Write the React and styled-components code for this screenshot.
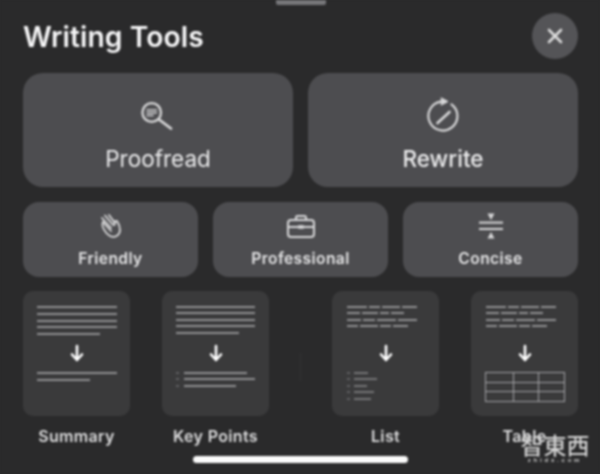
import React from 'react';
import styled, { createGlobalStyle } from 'styled-components';

const GlobalStyle = createGlobalStyle`
  html, body {
    margin: 0;
    padding: 0;
    background: #2a2a2b;
  }
`;

const Sheet = styled.div`
  position: relative;
  width: 600px;
  height: 474px;
  box-sizing: border-box;
  padding: 0 22px 0 23px;
  overflow: hidden;
  background: #2a2a2b;
  color: #e9e9ea;
  font-family: Inter, "Liberation Sans", sans-serif;
  filter: blur(0.85px);
`;

const Grabber = styled.div`
  width: 50px;
  height: 5px;
  margin: 0 auto 8px;
  background: #77777a;
  border-radius: 0 0 2px 2px;
`;

const Header = styled.header`
  display: flex;
  align-items: center;
  justify-content: space-between;
  height: 46px;
  margin-bottom: 14px;
`;

const Title = styled.h1`
  margin: 1px 0 0;
  font-size: 28.2px;
  font-weight: 600;
  letter-spacing: 0.1px;
  color: #f6f6f7;
`;

const CloseButton = styled.div`
  width: 46px;
  height: 46px;
  border-radius: 50%;
  background: #545457;
  display: flex;
  align-items: center;
  justify-content: center;
`;

const BigRow = styled.div`
  display: grid;
  grid-template-columns: 270px 270px;
  gap: 15px;
  margin-bottom: 15px;
`;

const BigButton = styled.div`
  height: 114px;
  border-radius: 20px;
  background: #4d4d50;
  display: flex;
  flex-direction: column;
  align-items: center;
  padding-top: 24px;
  box-sizing: border-box;
`;

const BigLabel = styled.span`
  margin-top: 12px;
  font-size: 22.5px;
  line-height: 28px;
  font-weight: ${p => (p.$medium ? 500 : 400)};
  color: #ececed;
`;

const MidRow = styled.div`
  display: grid;
  grid-template-columns: repeat(3, 175px);
  gap: 15px;
  margin-bottom: 14px;
`;

const MidButton = styled.div`
  height: 75px;
  border-radius: 16px;
  background: #4d4d50;
  display: flex;
  flex-direction: column;
  align-items: center;
  padding-top: 11px;
  box-sizing: border-box;
`;

const MidLabel = styled.span`
  margin-top: 10px;
  font-size: 15.6px;
  line-height: 20px;
  font-weight: 600;
  letter-spacing: 0.4px;
  color: #e6e6e7;
`;

const ThumbRow = styled.div`
  display: flex;
  justify-content: space-between;
  align-items: flex-start;
`;

const ThumbGroup = styled.div`
  display: flex;
  gap: 32px;
`;

const Separator = styled.div`
  width: 1px;
  height: 28px;
  margin-top: 62px;
  background: #323233;
`;

const ThumbItem = styled.div`
  width: 107px;
  display: flex;
  flex-direction: column;
  align-items: center;
`;

const ThumbCard = styled.div`
  width: 107px;
  height: 125px;
  border-radius: 10px;
  background: #3a3a3b;
  line-height: 0;
`;

const ThumbLabel = styled.span`
  margin-top: 10px;
  font-size: 16px;
  line-height: 20px;
  font-weight: 600;
  letter-spacing: 0.35px;
  white-space: nowrap;
  color: #dcdcdd;
`;

const HomeBar = styled.div`
  width: 215px;
  height: 7px;
  margin: 10px auto 0;
  border-radius: 4px;
  background: #fbfbfb;
`;

const Watermark = styled.div`
  position: absolute;
  left: 520px;
  top: 431px;
  width: 70px;
  text-align: center;
  color: #d4d4d4;
`;

const WatermarkName = styled.div`
  font-family: "Noto Sans CJK TC", "Noto Sans CJK SC", sans-serif;
  font-size: 23px;
  line-height: 26px;
  font-weight: 500;
  white-space: nowrap;
`;

const WatermarkSite = styled.div`
  font-family: "Liberation Sans", sans-serif;
  font-size: 6px;
  line-height: 7px;
  font-weight: 700;
  letter-spacing: 2.8px;
`;

const stroke = '#d8d8d9';

const ProofreadIcon = () => (
  <svg width="36" height="36" viewBox="0 0 36 36" fill="none" stroke={stroke} strokeLinecap="round">
    <circle cx="11.7" cy="15.5" r="9.3" strokeWidth="2.3" />
    <path d="M19 22.5 L31 31.5" strokeWidth="2.8" />
    <path d="M7 13h9.5M7 15.8h9.5M7 18.6h6" strokeWidth="1.5" />
  </svg>
);

const RewriteIcon = () => (
  <svg width="36" height="36" viewBox="0 0 36 36" fill="none" stroke={stroke} strokeLinecap="round">
    <path d="M26.5 7.3 A14.5 14.5 0 1 1 16 4.6" strokeWidth="2.2" />
    <path d="M16.5 1 L23 4.5 L16.5 8 Z" fill={stroke} strokeWidth="1" strokeLinejoin="round" />
    <path d="M12.5 26 L24.5 15" strokeWidth="2.6" />
  </svg>
);

const HandIcon = () => (
  <svg width="24" height="26" viewBox="0 0 24 26" fill="none" stroke={stroke} strokeLinecap="round" strokeLinejoin="round" strokeWidth="1.8">
    <path d="M4 9 L12 18" />
    <path d="M3 5 L12 15" />
    <path d="M6 2.5 L14 12" />
    <path d="M10 2 L16 10" />
    <path d="M4 9 C2 13 6 20 11 23 C16 25.5 21 22 21 17 C21 14 20 11 18 8 L15.5 8.5 L15.5 12" />
  </svg>
);

const BriefcaseIcon = () => (
  <svg width="30" height="26" viewBox="0 0 30 26" fill="none" stroke={stroke} strokeWidth="2" strokeLinejoin="round">
    <rect x="2" y="7" width="26" height="17" rx="3" />
    <path d="M10 7 V4.5 a1.5 1.5 0 0 1 1.5 -1.5 h7 a1.5 1.5 0 0 1 1.5 1.5 V7" />
    <path d="M2 14 H12 M18 14 H28" />
    <rect x="12" y="12.5" width="6" height="3" rx="1" fill={stroke} strokeWidth="0.6" />
  </svg>
);

const ConciseIcon = () => (
  <svg width="26" height="26" viewBox="0 0 26 26" fill={stroke} stroke="none">
    <path d="M9.5 0.5 H16.5 L13 7 Z" />
    <rect x="1" y="8.6" width="24" height="2" />
    <rect x="1" y="15" width="24" height="2" />
    <path d="M13 19 L16.5 25.5 H9.5 Z" />
  </svg>
);

const Arrow = ({ x }) => (
  <path
    d={`M${x} 55 V69 M${x - 5} 63.5 L${x} 69 L${x + 5} 63.5`}
    fill="none"
    stroke="#ffffff"
    strokeWidth="2.6"
    strokeLinecap="round"
    strokeLinejoin="round"
  />
);

const Line = ({ x1 = 14, x2, y, dash, color = '#8f8f91', w = 2 }) => (
  <line x1={x1} x2={x2} y1={y} y2={y} stroke={color} strokeWidth={w} strokeDasharray={dash} />
);

const Words = () => (
  <>
    <Line x1={15} x2={85} y={16} dash="20 2 11 2 18 2 15 0" />
    <Line x1={15} x2={72} y={22} dash="13 2 16 2 9 2 13 0" />
    <Line x1={15} x2={85} y={29} dash="14 2 12 2 19 2 19 0" />
    <Line x1={15} x2={76} y={35} dash="11 2 18 2 11 2 15 0" />
  </>
);

const Thumb = ({ children }) => (
  <ThumbCard>
    <svg width="107" height="125" viewBox="0 0 107 125">{children}</svg>
  </ThumbCard>
);

const SummaryThumb = () => (
  <Thumb>
    {[16, 23, 30, 36].map(y => <Line key={y} x2={94} y={y} />)}
    <Line x2={77} y={43} />
    <Arrow x={54} />
    <Line x2={94} y={82} />
    <Line x2={67} y={89} />
  </Thumb>
);

const KeyPointsThumb = () => (
  <Thumb>
    {[16, 22, 29, 35].map(y => <Line key={y} x2={93} y={y} />)}
    <Line x2={77} y={42} />
    <Arrow x={54} />
    {[[82, 85], [88, 93], [95, 74]].map(([y, x2]) => (
      <React.Fragment key={y}>
        <Line x1={14} x2={17} y={y} color="#5f5f61" />
        <Line x1={22} x2={x2} y={y} />
      </React.Fragment>
    ))}
  </Thumb>
);

const ListThumb = () => (
  <Thumb>
    <Words />
    <Arrow x={54} />
    {[[82, 36], [88, 45], [95, 35], [101, 42], [108, 39]].map(([y, x2]) => (
      <React.Fragment key={y}>
        <Line x1={15} x2={18} y={y} color="#5f5f61" />
        <Line x1={22} x2={x2} y={y} color="#747476" />
      </React.Fragment>
    ))}
  </Thumb>
);

const TableThumb = () => (
  <Thumb>
    <Words />
    <Arrow x={54} />
    <rect x="14.5" y="81.5" width="79" height="29" fill="none" stroke="#a4a4a6" strokeWidth="1" />
    <path d="M14.5 91.5 H93.5 M14.5 100.5 H93.5 M42.5 81.5 V110.5 M67.5 81.5 V110.5" fill="none" stroke="#a4a4a6" strokeWidth="1" />
  </Thumb>
);

const App = () => {
  return (
    <>
      <GlobalStyle />
      <Sheet>
        <Grabber />
        <Header>
          <Title>Writing Tools</Title>
          <CloseButton>
            <svg width="16" height="16" viewBox="0 0 16 16" fill="none" stroke="#dcdcdc" strokeWidth="2.6" strokeLinecap="round">
              <path d="M2 2 L14 14 M14 2 L2 14" />
            </svg>
          </CloseButton>
        </Header>

        <BigRow>
          <BigButton>
            <ProofreadIcon />
            <BigLabel>Proofread</BigLabel>
          </BigButton>
          <BigButton>
            <RewriteIcon />
            <BigLabel $medium>Rewrite</BigLabel>
          </BigButton>
        </BigRow>

        <MidRow>
          <MidButton>
            <HandIcon />
            <MidLabel>Friendly</MidLabel>
          </MidButton>
          <MidButton>
            <BriefcaseIcon />
            <MidLabel>Professional</MidLabel>
          </MidButton>
          <MidButton>
            <ConciseIcon />
            <MidLabel>Concise</MidLabel>
          </MidButton>
        </MidRow>

        <ThumbRow>
          <ThumbGroup>
            <ThumbItem>
              <SummaryThumb />
              <ThumbLabel>Summary</ThumbLabel>
            </ThumbItem>
            <ThumbItem>
              <KeyPointsThumb />
              <ThumbLabel>Key Points</ThumbLabel>
            </ThumbItem>
          </ThumbGroup>
          <Separator />
          <ThumbGroup>
            <ThumbItem>
              <ListThumb />
              <ThumbLabel>List</ThumbLabel>
            </ThumbItem>
            <ThumbItem>
              <TableThumb />
              <ThumbLabel>Table</ThumbLabel>
            </ThumbItem>
          </ThumbGroup>
        </ThumbRow>

        <HomeBar />

        <Watermark>
          <WatermarkName>智東西</WatermarkName>
          <WatermarkSite>zhidx.com</WatermarkSite>
        </Watermark>
      </Sheet>
    </>
  );
};

export default App;
